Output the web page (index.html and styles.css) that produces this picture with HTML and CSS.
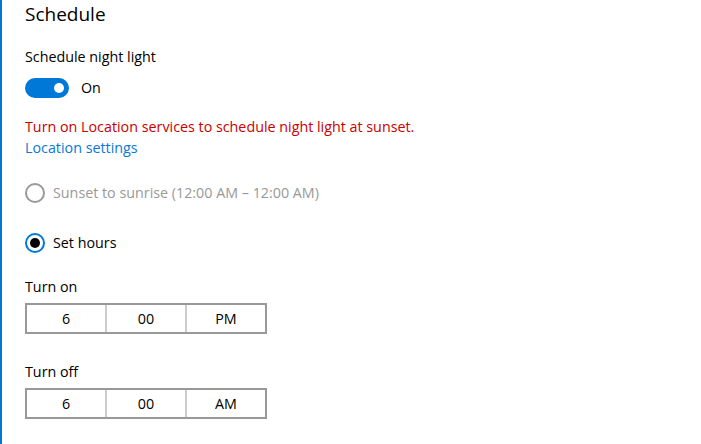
FILE: index.html
```html
<!DOCTYPE html>
<html>
<head>
<meta charset="utf-8">
<link rel="stylesheet" href="styles.css">
</head>
<body>
<div class="page">
  <h1 class="heading">Schedule</h1>
  <div class="label first">Schedule night light</div>
  <div class="toggle-row">
    <span class="toggle"><span class="knob"></span></span>
    <span class="toggle-text">On</span>
  </div>
  <div class="error">Turn on Location services to schedule night light at sunset.</div>
  <a class="link" href="#">Location settings</a>
  <div class="radio-row disabled first-radio">
    <span class="radio"></span>
    <span class="radio-text">Sunset to sunrise (12:00 AM – 12:00 AM)</span>
  </div>
  <div class="radio-row second-radio">
    <span class="radio checked"><span class="dot"></span></span>
    <span class="radio-text">Set hours</span>
  </div>
  <div class="label turn-on">Turn on</div>
  <div class="time">
    <span class="cell">6</span>
    <span class="cell">00</span>
    <span class="cell">PM</span>
  </div>
  <div class="label turn-off">Turn off</div>
  <div class="time">
    <span class="cell">6</span>
    <span class="cell">00</span>
    <span class="cell">AM</span>
  </div>
</div>
</body>
</html>
```
FILE: styles.css
```css
html, body {
  margin: 0;
  padding: 0;
  background: #fff;
}
body {
  font-family: "Open Sans", "Noto Sans", sans-serif;
  font-size: 14.3px;
  color: #000;
}
.page {
  box-sizing: border-box;
  height: 444px;
  border-left: 2px solid #0078d7;
  padding-left: 23px;
  display: flex;
  flex-direction: column;
  align-items: flex-start;
}
.heading {
  margin: 0;
  font-size: 19px;
  font-weight: 400;
  line-height: 28px;
}
.label {
  line-height: 20px;
}
.label.first { margin-top: 19px; }
.toggle-row {
  margin-top: 11px;
  display: flex;
  align-items: center;
  height: 20px;
}
.toggle {
  width: 44px;
  height: 20px;
  border-radius: 10px;
  background: #0078d7;
  display: flex;
  align-items: center;
  justify-content: flex-end;
  box-sizing: border-box;
  padding-right: 5px;
}
.knob {
  width: 10px;
  height: 10px;
  border-radius: 50%;
  background: #fff;
}
.toggle-text { margin-left: 12px; line-height: 20px; }
.error {
  margin-top: 19px;
  line-height: 20px;
  color: #c80000;
}
.link {
  margin-top: 1px;
  line-height: 20px;
  color: #0a78d7;
  text-decoration: none;
}
.radio-row {
  display: flex;
  align-items: center;
  height: 20px;
}
.first-radio { margin-top: 25px; }
.second-radio { margin-top: 30px; }
.radio {
  box-sizing: border-box;
  width: 20px;
  height: 20px;
  border-radius: 50%;
  border: 2px solid #000;
  display: flex;
  align-items: center;
  justify-content: center;
}
.radio.checked { border-color: #0078d7; }
.dot {
  width: 10px;
  height: 10px;
  border-radius: 50%;
  background: #000;
}
.radio-text { margin-left: 8px; line-height: 20px; }
.disabled { color: #999; }
.disabled .radio { border-color: #999; }
.turn-on { margin-top: 24px; }
.turn-off { margin-top: 28px; }
.time {
  margin-top: 6px;
  box-sizing: border-box;
  width: 242px;
  height: 31px;
  border: 2px solid #999;
  display: flex;
  background: #fff;
}
.cell {
  flex: 1;
  display: flex;
  align-items: center;
  justify-content: center;
  border-left: 2px solid #ccc;
}
.cell:first-child { border-left: none; }
```
